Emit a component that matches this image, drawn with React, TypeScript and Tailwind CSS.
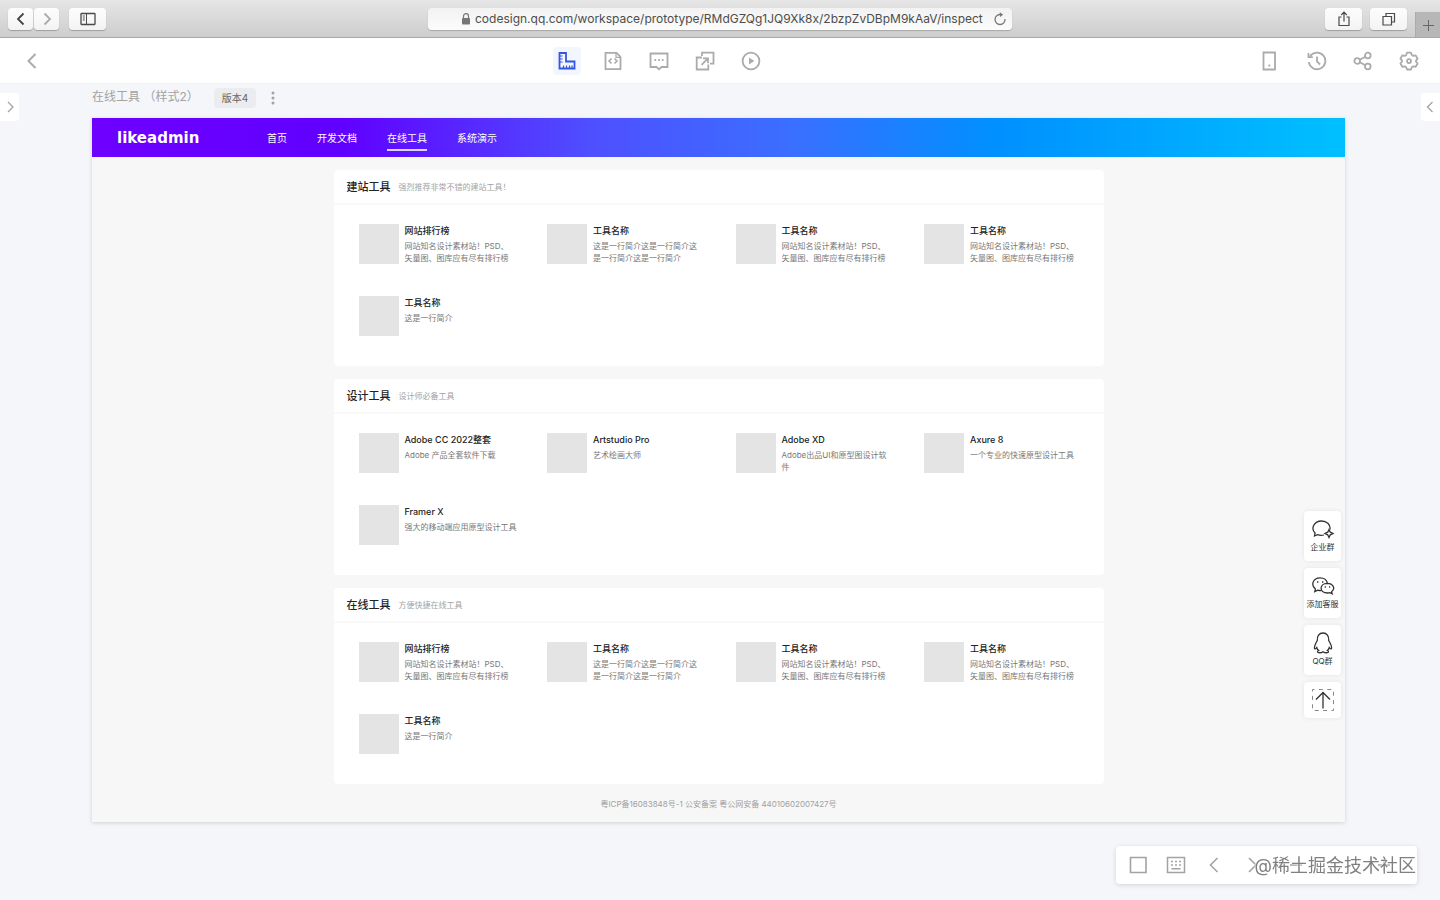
import type { ReactNode } from 'react';

interface Tool {
  name: string;
  desc: string;
}

interface Section {
  title: string;
  subtitle: string;
  tools: Tool[];
}

const SITE_DESC = '网站知名设计素材站！PSD、\n矢量图、图库应有尽有排行榜';
const LINE_DESC = '这是一行简介这是一行简介这\n是一行简介这是一行简介';

const COMMON_TOOLS: Tool[] = [
  { name: '网站排行榜', desc: SITE_DESC },
  { name: '工具名称', desc: LINE_DESC },
  { name: '工具名称', desc: SITE_DESC },
  { name: '工具名称', desc: SITE_DESC },
  { name: '工具名称', desc: '这是一行简介' },
];

const SECTIONS: Section[] = [
  { title: '建站工具', subtitle: '强烈推荐非常不错的建站工具！', tools: COMMON_TOOLS },
  {
    title: '设计工具',
    subtitle: '设计师必备工具',
    tools: [
      { name: 'Adobe CC 2022整套', desc: 'Adobe 产品全套软件下载' },
      { name: 'Artstudio Pro', desc: '艺术绘画大师' },
      { name: 'Adobe XD', desc: 'Adobe出品UI和原型图设计软\n件' },
      { name: 'Axure 8', desc: '一个专业的快速原型设计工具' },
      { name: 'Framer X', desc: '强大的移动端应用原型设计工具' },
    ],
  },
  { title: '在线工具', subtitle: '方便快捷在线工具', tools: COMMON_TOOLS },
];

const NAV = ['首页', '开发文档', '在线工具', '系统演示'];

function Icon({ size = 20, width = 2, children }: { size?: number; width?: number; children: ReactNode }) {
  return (
    <svg
      width={size}
      height={size}
      viewBox={`0 0 ${size} ${size}`}
      fill="none"
      stroke="currentColor"
      strokeWidth={width}
      aria-hidden="true"
      className="shrink-0"
    >
      {children}
    </svg>
  );
}

function ChromeButton({ label, className, children }: { label: string; className: string; children: ReactNode }) {
  return (
    <button
      aria-label={label}
      className={`flex h-[22px] items-center justify-center rounded bg-gradient-to-b from-[#fdfdfd] to-[#f3f3f3] shadow-[0_1px_1px_rgba(0,0,0,0.25)] ${className}`}
    >
      {children}
    </button>
  );
}

function BrowserBar() {
  return (
    <header className="grid h-[38px] grid-cols-[1fr_minmax(0,584px)_1fr] items-center border-b border-[#a9a9a9] bg-gradient-to-b from-[#e6e6e6] to-[#cdcdcd]">
      <div className="flex items-center pl-2">
        <ChromeButton label="后退" className="w-[25px] text-[#444]">
          <Icon size={16} width={1.8}><path d="M10.5 2.5 5 8l5.5 5.5" /></Icon>
        </ChromeButton>
        <ChromeButton label="前进" className="ml-px w-[25px] text-[#aaa]">
          <Icon size={16} width={1.8}><path d="M5.5 2.5 11 8l-5.5 5.5" /></Icon>
        </ChromeButton>
        <ChromeButton label="边栏" className="ml-[10px] w-[37px] text-[#4a4a4a]">
          <Icon size={16} width={1}>
            <rect x="1" y="2.5" width="14" height="11" rx="0.5" strokeWidth="1.3" />
            <path d="M6.5 3v10M2.8 5h2M2.8 7h2M2.8 9h2" />
          </Icon>
        </ChromeButton>
      </div>

      <div className="flex h-[22px] items-center rounded bg-gradient-to-b from-[#f2f2f2] to-[#fcfcfc] pl-[33px] pr-[5px] shadow-[0_1px_1px_rgba(0,0,0,0.2)]">
        <svg width="10" height="12" viewBox="0 0 10 12" className="shrink-0 text-[#777]" aria-hidden="true">
          <path d="M2.5 5.5V3.2a2.5 2.5 0 0 1 5 0v2.3" fill="none" stroke="currentColor" strokeWidth="1.2" />
          <rect x="1" y="5" width="8" height="6.5" rx="0.8" fill="currentColor" />
        </svg>
        <input
          aria-label="地址"
          readOnly
          defaultValue="codesign.qq.com/workspace/prototype/RMdGZQg1JQ9Xk8x/2bzpZvDBpM9kAaV/inspect"
          className="ml-1 min-w-0 flex-1 bg-transparent text-[12px] text-[#4d4d4d] outline-none"
        />
        <button aria-label="刷新" className="text-[#777]">
          <Icon size={14} width={1.3}>
            <path d="M8 2.6A5 5 0 1 0 12 7" />
            <path d="M6.8 0.2 10.2 2.7 7 5z" fill="currentColor" stroke="none" />
          </Icon>
        </button>
      </div>

      <div className="flex h-full items-center justify-end text-[#4a4a4a]">
        <ChromeButton label="共享" className="mr-2 w-[37px]">
          <Icon size={16} width={1.2}>
            <path d="M5.5 6H3v8.5h10V6h-2.5M8 10.5V1.5M5.2 4 8 1.2 10.8 4" />
          </Icon>
        </ChromeButton>
        <ChromeButton label="标签页" className="mr-2 w-[37px]">
          <Icon size={16} width={1.2}>
            <path d="M2 5.5h8.5V14H2zM5 5.5V2.5h8.500v8.500h-3" />
          </Icon>
        </ChromeButton>
        <button aria-label="新标签页" className="flex h-[25px] w-[25px] items-center justify-center self-end border-l border-[#aaa] bg-[#b7b7b7] text-[#666]">
          <Icon size={12} width={1}><path d="M6.5 1v11M1 6.5h11" /></Icon>
        </button>
      </div>
    </header>
  );
}

function BarButton({ label, active, children }: { label: string; active?: boolean; children: ReactNode }) {
  return (
    <button
      aria-label={label}
      className={`flex h-7 w-7 items-center justify-center rounded ${active ? 'bg-[#f2f6ff] text-[#3355e8]' : 'text-[#ababab]'}`}
    >
      {children}
    </button>
  );
}

function AppBar() {
  return (
    <div className="flex h-[46px] items-center justify-between border-b border-[#f0f1f5] bg-white pr-[17px]">
      <div className="w-[61px] pl-[18px]">
        <BarButton label="返回">
          <Icon><path d="M13.5 3 6.5 10l7 7" /></Icon>
        </BarButton>
      </div>

      <div className="flex gap-[18px]">
        <BarButton label="标注" active>
          <Icon width={1.8}>
            <path d="M2.5 2h6.5v8.5h8.5v7h-15z" />
            <path d="M3 5h2.6M3 8h2.6M3 11h2.6M6.500 17v-2.600M9.5 17v-2.600M12.5 17v-2.600M15 17v-2.600" strokeWidth="1.2" />
          </Icon>
        </BarButton>
        <BarButton label="代码">
          <Icon width={1.8}>
            <path d="M2.500 1.8h11l4 4v12.400h-15z" />
            <path d="M13 2v4.300h4.300" strokeWidth="1.2" />
            <path d="M8.5 7.5 6 10l2.5 2.5M11.5 7.500 14 10l-2.500 2.500" strokeWidth="1.6" />
          </Icon>
        </BarButton>
        <BarButton label="评论">
          <Icon width={1.8}>
            <path d="M1.5 2.500h17v13.500h-6L10 18.300 7.500 16h-6z" />
            <path d="M5.5 9h1.600M9.200 9h1.600M12.900 9h1.600" />
          </Icon>
        </BarButton>
        <BarButton label="跳转">
          <Icon width={1.8}>
            <path d="M7 6.500H1.700v12h11.600v-5M7 5V1.700h11.500v11h-3.500" />
            <path d="M6.500 13.800 12.700 7.600M8 7.300h5v5" />
          </Icon>
        </BarButton>
        <BarButton label="播放">
          <Icon width={1.8}>
            <circle cx="10" cy="10" r="8.400" />
            <path d="M8 6.500v7l5.300-3.500z" fill="currentColor" stroke="none" />
          </Icon>
        </BarButton>
      </div>

      <div className="flex gap-[18px]">
        <BarButton label="设备">
          <Icon width={1.8}>
            <path d="M2.500 1.500h11.500v17H2.500z" />
            <path d="M7.300 14.500h2" />
          </Icon>
        </BarButton>
        <BarButton label="历史">
          <Icon width={1.8}>
            <path d="M3 5.500a8.300 8.300 0 1 1-1.200 5.500" />
            <path d="M1.500 2v4.200h4.300" />
            <path d="M10 5.500v5l3 3" />
          </Icon>
        </BarButton>
        <BarButton label="分享">
          <Icon width={1.8}>
            <circle cx="4.200" cy="10" r="2.800" />
            <circle cx="14.800" cy="4.500" r="2.800" />
            <circle cx="14.800" cy="15.500" r="2.800" />
            <path d="M6.800 8.700 12.300 5.800M6.800 11.300l5.500 2.900" />
          </Icon>
        </BarButton>
        <BarButton label="设置">
          <Icon width={1.8}>
            <path
              d="M8 1.700h4l.8 2.300 1.500.9 2.400-.5 1.900 3.300-1.600 1.900v1l1.600 1.900-1.900 3.300-2.400-.5-1.500.9-.8 2.300H8l-.8-2.300-1.500-.9-2.400.5-1.900-3.300L3 10.600v-1L1.400 7.700l1.900-3.300 2.400.5L7.200 4z"
              strokeLinejoin="round"
            />
            <circle cx="10" cy="10.100" r="2" />
          </Icon>
        </BarButton>
      </div>
    </div>
  );
}

function ToolCard({ tool }: { tool: Tool }) {
  return (
    <div className="flex h-10 min-w-0 gap-[6px]">
      <div className="h-10 w-10 shrink-0 bg-[#e4e4e4]" />
      <div>
        <h3 className="whitespace-nowrap text-[9px] font-medium leading-[14px] text-[#222]">{tool.name}</h3>
        <p className="mt-[2px] whitespace-pre text-[8px] leading-[12px] text-[#777]">{tool.desc}</p>
      </div>
    </div>
  );
}

function ToolSection({ section }: { section: Section }) {
  return (
    <section className="rounded-sm bg-white">
      <div className="flex h-[35px] items-center gap-2 border-b-2 border-[#f9f9f9] px-[13px]">
        <h2 className="text-[11px] font-medium leading-4 text-[#222]">{section.title}</h2>
        <span className="text-[8px] leading-4 text-[#a3a3a3]">{section.subtitle}</span>
      </div>
      <div className="grid grid-cols-4 gap-x-[37px] gap-y-8 pb-[30px] pl-[25px] pr-7 pt-[19px]">
        {section.tools.map((tool, index) => (
          <ToolCard key={index} tool={tool} />
        ))}
      </div>
    </section>
  );
}

function ContactButton({ label, children }: { label: string; children: ReactNode }) {
  return (
    <button className="flex h-[50px] w-[37px] flex-col items-center justify-center rounded bg-white pb-[3px] text-[#333] shadow-[0_0_5px_rgba(0,0,0,0.08)]">
      {children}
      <span className="whitespace-nowrap text-[8px] leading-[12px]">{label}</span>
    </button>
  );
}

function ContactRail() {
  return (
    <aside className="absolute bottom-[104px] right-1 flex flex-col gap-[7px]">
      <ContactButton label="企业群">
        <Icon size={24} width={1.3}>
          <path d="M13 18c-2 .6-4.500.6-6.500-.3L3.500 19l.6-3C-.5 11.500 3 4 10.500 4c5.500 0 9.300 4 8.500 8.500" />
          <path d="m18 12.500 1.300 2.700L22 16.500l-2.700 1.300L18 20.500l-1.300-2.700-2.700-1.300 2.700-1.300z" />
        </Icon>
      </ContactButton>
      <ContactButton label="添加客服">
        <Icon size={24} width={1.3}>
          <path d="M10.500 16.500c-1.300.2-2.500 0-3.700-.4L3.800 17.500l.6-2.600C-.5 11 2 3.800 9 3.800c4 0 7 2.300 7.300 5.600" />
          <path d="M16.300 9.300c-8.300.2-8.300 9.700.2 9.700.8 0 1.600-.1 2.300-.4l2.300 1.100-.5-2c4.200-3 1.500-8.400-4.300-8.400z" />
          <path d="M6 8h1.400M11 8h1.400M13.700 13h1.200M18 13h1.200" strokeWidth="1.5" />
        </Icon>
      </ContactButton>
      <ContactButton label="QQ群">
        <Icon size={24} width={1.3}>
          <path d="M12 2c-4 0-6 3-5.700 7.500C4.500 12.500 3 15.500 3.500 17.500c.5 1 1.500 0 2.200-1 .3 1.300 1 2.300 2 3-1.500.7-1.700 2 0 2.200 1.700.2 3.300-.2 4.300-1 1 .8 2.600 1.200 4.300 1 1.700-.2 1.500-1.500 0-2.200 1-.7 1.700-1.700 2-3 .7 1 1.700 2 2.200 1 .5-2-1-5-2.800-8C18 5 16 2 12 2z" />
        </Icon>
      </ContactButton>
      <button
        aria-label="回到顶部"
        className="flex h-9 w-[37px] items-center justify-center rounded bg-white text-[#333] shadow-[0_0_5px_rgba(0,0,0,0.08)]"
      >
        <Icon size={22} width={1.3}>
          <path d="M.5.5h21v21H.5z" strokeWidth="1" strokeDasharray="4 4.400" strokeDashoffset="2" stroke="#888" />
          <path d="M11 19.500V3.500M4 10.500l7-7 7 7" />
        </Icon>
      </button>
    </aside>
  );
}

function Artboard() {
  return (
    <main className="relative bg-[#f7f7f7] shadow-[0_1px_4px_rgba(0,0,0,0.15)]">
      <div className="flex h-[39px] items-center bg-[linear-gradient(90deg,#6e00ff_0%,#6000ff_20%,#4e50ff_40%,#3a6fff_56%,#0090ff_72%,#00c0ff_100%)] pl-[25px] text-white">
        <div className="w-[150px] font-['DejaVu_Sans',sans-serif] text-[15px] font-bold leading-5">likeadmin</div>
        <nav className="flex gap-[30px] text-[10px] leading-[22px]">
          {NAV.map((item) => (
            <a
              key={item}
              href="#"
              className={item === '在线工具' ? 'border-y-2 border-t-transparent border-b-white/80' : 'border-y-2 border-transparent'}
            >
              {item}
            </a>
          ))}
        </nav>
      </div>

      <div className="mx-auto flex max-w-[770px] flex-col gap-[13px] pt-[13px]">
        {SECTIONS.map((section) => (
          <ToolSection key={section.title} section={section} />
        ))}
      </div>

      <footer className="pb-3 pt-[14px] text-center text-[8px] leading-[12px] text-[#a0a0a0]">
        粤ICP备16083848号-1 公安备案 粤公网安备 44010602007427号
      </footer>

      <ContactRail />
    </main>
  );
}

function ZoomPanel() {
  return (
    <div className="fixed bottom-4 right-[23px] flex h-[38px] w-[301px] items-center rounded bg-white pl-3 text-[#a3a3a3] shadow-[0_1px_5px_rgba(0,0,0,0.14)]">
      <button aria-label="画布">
        <Icon width={1.6}><path d="M2.500 2.500h15.500v15h-15.500z" /></Icon>
      </button>
      <button aria-label="快捷键" className="ml-[18px]">
        <Icon width={1.5}>
          <path d="M1.500 2.500h17v15h-17z" />
          <path d="M5 6.500h2M9 6.500h2M13 6.500h2M5 10h2M9 10h2M13 10h2M5.500 13.800h9" />
        </Icon>
      </button>
      <button aria-label="上一页" className="ml-[18px]">
        <Icon width={1.6}><path d="M13.500 3 6.500 10l7 7" /></Icon>
      </button>
      <button aria-label="下一页" className="ml-[18px]">
        <Icon width={1.6}><path d="m7 3 7 7-7 7" /></Icon>
      </button>
      <button aria-label="缩小" className="ml-6">
        <Icon width={1.6}><path d="M4 10h12" /></Icon>
      </button>
      <button aria-label="放大" className="ml-[68px]">
        <Icon width={1.6}><path d="M4 10h12M10 4v12" /></Icon>
      </button>
      <span className="absolute right-px top-[6px] whitespace-nowrap text-[18px] leading-7 text-[#808080] [text-shadow:0_0_2px_#fff,0_0_2px_#fff]">
        @稀土掘金技术社区
      </span>
    </div>
  );
}

export default function App() {
  return (
    <div lang="zh-CN" className="min-h-screen bg-[#f4f6fa] font-['Inter','Noto_Sans_CJK_SC',sans-serif]">
      <BrowserBar />
      <AppBar />
      <div className="relative pb-[78px] pl-[92px] pr-[95px]">
        <div className="flex h-[34px] items-start pt-1 text-[#a3a3a3]">
          <h1 className="text-[12px] leading-[18px]">在线工具 （样式2）</h1>
          <span className="ml-[15px] rounded-sm bg-[#ebecef] px-2 text-[10px] leading-[20px] text-[#666]">版本4</span>
          <button aria-label="更多" className="ml-[9px] mt-[2px]">
            <Icon size={16}>
              <g fill="currentColor" stroke="none">
                <circle cx="8" cy="3" r="1.500" />
                <circle cx="8" cy="8" r="1.500" />
                <circle cx="8" cy="13" r="1.500" />
              </g>
            </Icon>
          </button>
        </div>
        <Artboard />

        {/* Panel toggles */}
        <button aria-label="展开左侧" className="absolute left-0 top-[9px] flex h-7 w-[19px] items-center justify-center rounded-r bg-white text-[#a3a3a3]">
          <Icon size={14} width={1.3}><path d="m5 2 5 5-5 5" /></Icon>
        </button>
        <button aria-label="展开右侧" className="absolute right-0 top-[9px] flex h-7 w-[19px] items-center justify-center rounded-l bg-white text-[#a3a3a3]">
          <Icon size={14} width={1.3}><path d="M8.500 2 3.500 7l5 5" /></Icon>
        </button>
      </div>
      <ZoomPanel />
    </div>
  );
}
